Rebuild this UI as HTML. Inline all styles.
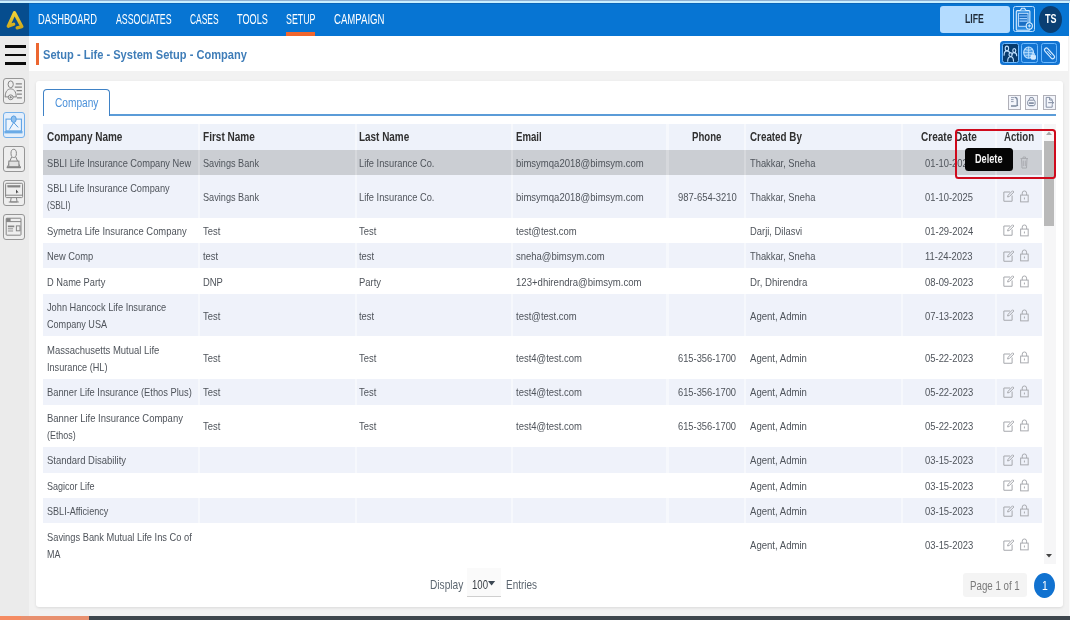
<!DOCTYPE html>
<html lang="en"><head><meta charset="utf-8"><title>Setup - Life - System Setup - Company</title>
<style>
html,body{margin:0;padding:0}
body{width:1070px;height:620px;position:relative;overflow:hidden;background:#f2f2f2;font-family:"Liberation Sans",sans-serif;color:#555}
.a{position:absolute}
.t{position:absolute;white-space:nowrap;transform-origin:0 50%;line-height:17px;filter:blur(.35px)}
svg{filter:blur(.3px)}
.b{font-size:12px;color:#5a5d62}
.h{font-size:12.5px;font-weight:bold;color:#2a2a2a}
.nav{font-size:13.5px;color:#fff}
.cell{position:absolute}
svg{position:absolute;overflow:visible}
</style></head><body>

<div class="a" style="left:0;top:0;width:1070px;height:1px;background:#8fb0d2"></div>
<div class="a" style="left:0;top:1px;width:1070px;height:2px;background:#c9efff"></div>
<div class="a" style="left:0;top:3px;width:1068.5px;height:33px;background:#0775d3"></div>
<div class="a" style="left:1068.5px;top:3px;width:1.5px;height:617px;background:#fafafa"></div>
<div class="a" style="left:0;top:3px;width:29px;height:33px;background:#064d8e"></div>
<svg style="left:5px;top:9px" width="20" height="22" viewBox="0 0 20 22"><defs><linearGradient id="g" gradientUnits="userSpaceOnUse" x1="0" y1="2" x2="0" y2="21"><stop offset="0" stop-color="#f6d63a"/><stop offset="1" stop-color="#c9a216"/></linearGradient></defs>
<path d="M3.3 17.2 L9.5 3.8 L16.8 17.6 L12.2 18.8 M3.3 17.2 L8.6 15.2" fill="none" stroke="url(#g)" stroke-width="3.3" stroke-linejoin="round" stroke-linecap="round"/></svg>
<span class="t" style="left:38.4px;top:18.8px;font:14.3px 'Liberation Sans',sans-serif;line-height:17px;color:#fff;transform:translateY(-50%) scaleX(0.652);">DASHBOARD</span>
<span class="t" style="left:116.0px;top:18.8px;font:14.3px 'Liberation Sans',sans-serif;line-height:17px;color:#fff;transform:translateY(-50%) scaleX(0.615);">ASSOCIATES</span>
<span class="t" style="left:189.7px;top:18.8px;font:14.3px 'Liberation Sans',sans-serif;line-height:17px;color:#fff;transform:translateY(-50%) scaleX(0.590);">CASES</span>
<span class="t" style="left:237.4px;top:18.8px;font:14.3px 'Liberation Sans',sans-serif;line-height:17px;color:#fff;transform:translateY(-50%) scaleX(0.639);">TOOLS</span>
<span class="t" style="left:286.4px;top:18.8px;font:14.3px 'Liberation Sans',sans-serif;line-height:17px;color:#fff;transform:translateY(-50%) scaleX(0.619);">SETUP</span>
<span class="t" style="left:334.0px;top:18.8px;font:14.3px 'Liberation Sans',sans-serif;line-height:17px;color:#fff;transform:translateY(-50%) scaleX(0.672);">CAMPAIGN</span>
<div class="a" style="left:286.2px;top:32.3px;width:29.3px;height:3.7px;background:#f0662d"></div>
<div class="a" style="left:29px;top:3px;width:1039.5px;height:1px;background:#0a66ba"></div>
<div class="a" style="left:940.4px;top:6.2px;width:69.8px;height:26.5px;background:#b4dcff;border-radius:3px"></div>
<span class="t" style="left:965.4px;top:17.8px;font:bold 13.5px 'Liberation Sans',sans-serif;line-height:17px;color:#1f2b38;transform:translateY(-50%) scaleX(0.643);">LIFE</span>
<div class="a" style="left:1013.3px;top:5.6px;width:21.9px;height:26.4px;box-sizing:border-box;border:1.3px solid #b5dcff;border-radius:2.5px;background:#0f79d6"></div>
<svg style="left:1013.3px;top:5.6px" width="21.9" height="26.4" viewBox="0 0 21.9 26.4" fill="none" stroke="#d9eeff" stroke-width="1.1">
<rect x="3.3" y="4.6" width="13.6" height="19.6" rx="1" fill="#2a8ae0"/><path d="M7.3 4.6 L8.6 2.2 L11.6 2.2 L12.9 4.6" fill="#2a8ae0"/>
<rect x="5.6" y="7.3" width="9.4" height="13" fill="#1b6fc4" stroke="#cfe8ff" stroke-width="0.9"/><path d="M6.5 10h7.6M6.5 12.6h7.6M6.5 15.2h7.6" stroke="#9fd0ff" stroke-width="1.2"/>
<circle cx="16.3" cy="19.9" r="3.1" fill="#0f79d6" stroke="#d9eeff" stroke-width="1.1"/><path d="M16.3 18.3v3.2M14.7 19.9h3.2" stroke-width="1"/></svg>
<div class="a" style="left:1038.9px;top:5.5px;width:23.1px;height:27.4px;border-radius:50%;background:#0a3f73"></div>
<span class="t" style="left:1044.7px;top:18.2px;font:bold 13.5px 'Liberation Sans',sans-serif;line-height:17px;color:#fff;transform:translateY(-50%) scaleX(0.666);">TS</span>
<div class="a" style="left:0;top:36px;width:28.7px;height:580px;background:#ebebeb"></div>
<div class="a" style="left:5px;top:45.2px;width:21px;height:2.8px;background:#0c0c0c"></div>
<div class="a" style="left:5px;top:53.6px;width:21px;height:2.8px;background:#0c0c0c"></div>
<div class="a" style="left:5px;top:61.9px;width:21px;height:2.8px;background:#0c0c0c"></div>
<div class="a" style="left:28.7px;top:36px;width:1039.8px;height:35px;background:#fff"></div>
<div class="a" style="left:35.9px;top:42.8px;width:3.3px;height:22px;background:#ec6630"></div>
<span class="t" style="left:43.4px;top:54.3px;font:bold 13px 'Liberation Sans',sans-serif;line-height:17px;color:#3f7db8;transform:translateY(-50%) scaleX(0.853);">Setup - Life - System Setup - Company</span>
<div class="a" style="left:999.5px;top:40.9px;width:60.4px;height:24.4px;background:#1273d1;border-radius:3.5px"></div>
<div class="a" style="left:1002.0px;top:43.1px;width:16.6px;height:20.3px;box-sizing:border-box;border:1.1px solid #6cb9ff;border-radius:2.5px;background:#073b6d"></div>
<div class="a" style="left:1021.4px;top:43.1px;width:16.6px;height:20.3px;box-sizing:border-box;border:1.1px solid #6cb9ff;border-radius:2.5px;background:#1273d1"></div>
<div class="a" style="left:1040.9px;top:43.1px;width:16.6px;height:20.3px;box-sizing:border-box;border:1.1px solid #6cb9ff;border-radius:2.5px;background:#1273d1"></div>
<svg style="left:1002.0px;top:43.1px" width="16.6" height="20.3" viewBox="0 0 16.6 20.3" fill="none" stroke="#bfe0ff" stroke-width="1.1" stroke-linecap="round">
<ellipse cx="4.9" cy="5.4" rx="1.7" ry="2.3"/><path d="M2.1 12.2c0-3 1.2-4.3 2.8-4.3s2.6 1 2.9 2.4"/>
<ellipse cx="12.3" cy="7.6" rx="1.5" ry="2"/><path d="M9.8 11.2c.4-1 1.3-1.6 2.5-1.6 1.6 0 2.4 1.2 2.4 3.2"/>
<ellipse cx="8.6" cy="11.6" rx="1.6" ry="2"/><path d="M5.7 18.2c0-3 1.2-4.4 2.9-4.4s2.9 1.4 2.9 4.4"/></svg>
<svg style="left:1021.4px;top:43.1px" width="16.6" height="20.3" viewBox="0 0 16.6 20.3" fill="none" stroke="#c4e3ff" stroke-width="1.1">
<ellipse cx="7.6" cy="9.6" rx="4.9" ry="5.6" fill="#7fc0f7" fill-opacity=".55"/><path d="M7.6 4v11.2M2.7 9.6h9.8M4.2 6.3c2 1.2 4.8 1.2 6.8 0M4.2 12.9c2-1.2 4.8-1.2 6.8 0" stroke-width=".8"/>
<rect x="10.1" y="12.3" width="4.4" height="3.9" rx=".6" fill="#cfe8ff" stroke="#e6f3ff" stroke-width=".8"/><path d="M11.1 12.3v-1.2a1.2 1.2 0 0 1 2.4 0v1.2" stroke-width=".9"/></svg>
<svg style="left:1040.9px;top:43.1px" width="16.6" height="20.3" viewBox="0 0 16.6 20.3" fill="none" stroke="#d4eaff" stroke-width="1.2">
<g transform="translate(8.5 10.4) rotate(-42)"><rect x="-1.9" y="-6.6" width="3.8" height="13.2" rx="1.9"/><path d="M0 -3.4v6" stroke-width=".9"/></g></svg>
<div class="a" style="left:3.3px;top:78.1px;width:21.7px;height:25.8px;box-sizing:border-box;border:1.4px solid #969696;border-radius:3px;background:#eeeeee"></div>
<svg style="left:3.3px;top:78.1px" width="21.7" height="25.8" viewBox="0 0 21.7 25.8" fill="none" stroke="#858585" stroke-width="1"><ellipse cx="7.7" cy="6.3" rx="2.6" ry="3.4"/><path d="M2.2 18.9C2.2 13 5 10.9 7.7 10.9S13.2 13 13.2 18.9M1.8 18.9h3.6M10 18.9h3.6"/><circle cx="7.7" cy="19.3" r="2.4"/><circle cx="7.7" cy="19.3" r=".7" fill="#858585"/><path d="M12.8 5.8h6.1M11.8 9.1h7.1M13.6 12.6h5.3M13.9 16.2h5M13.9 19.8h5" stroke-width="1.2"/></svg>
<div class="a" style="left:3.3px;top:112.1px;width:21.7px;height:25.8px;box-sizing:border-box;border:1.4px solid #74b0ea;border-radius:3px;background:#e3eefb"></div>
<svg style="left:3.3px;top:112.1px" width="21.7" height="25.8" viewBox="0 0 21.7 25.8" fill="none" stroke="#559de2" stroke-width="1"><rect x="3" y="7.1" width="15.4" height="11.8" fill="#eef5fd"/><path d="M1.4 20.2h18.1" stroke="#6aaae6" stroke-width="2.4"/><ellipse cx="10.7" cy="7.2" rx="2.5" ry="3.3" fill="#8fc0ee"/><path d="M10.7 10.5L6.3 17.6M10.7 10.5L15.2 15.4"/></svg>
<div class="a" style="left:3.3px;top:146.1px;width:21.7px;height:25.8px;box-sizing:border-box;border:1.4px solid #969696;border-radius:3px;background:#eeeeee"></div>
<svg style="left:3.3px;top:146.1px" width="21.7" height="25.8" viewBox="0 0 21.7 25.8" fill="none" stroke="#858585" stroke-width="1"><ellipse cx="10.7" cy="7.4" rx="2.7" ry="4.1"/><path d="M8.6 11 L4.4 21.2M12.8 11L17.2 21.2M3.8 21.4h14" /><path d="M3.8 21.4h14" stroke-width="1.7"/><rect x="5.8" y="15.1" width="10.1" height="5.6" fill="#e2e2e2"/></svg>
<div class="a" style="left:3.3px;top:179.8px;width:21.7px;height:25.8px;box-sizing:border-box;border:1.4px solid #969696;border-radius:3px;background:#eeeeee"></div>
<svg style="left:3.3px;top:179.8px" width="21.7" height="25.8" viewBox="0 0 21.7 25.8" fill="none" stroke="#858585" stroke-width="1"><rect x="2.6" y="3.3" width="17" height="14.3" rx="1"/><path d="M2.6 15.2h17"/><rect x="4.8" y="5.5" width="12.2" height="1.6" fill="#858585" stroke-width=".6"/><path d="M13 9.6l2.6 2.8-1.6.1-.9 1.3z" fill="#444" stroke="none"/><path d="M8.2 17.6L7.5 21.9h6.6l-.7-4.3M5.8 22h10"/></svg>
<div class="a" style="left:3.3px;top:213.9px;width:21.7px;height:25.8px;box-sizing:border-box;border:1.4px solid #969696;border-radius:3px;background:#eeeeee"></div>
<svg style="left:3.3px;top:213.9px" width="21.7" height="25.8" viewBox="0 0 21.7 25.8" fill="none" stroke="#858585" stroke-width="1"><rect x="3.2" y="4.2" width="14.8" height="17" rx=".6"/><path d="M3.2 7.6h14.8"/><rect x="3.2" y="4.2" width="4.4" height="3.4" fill="#858585" stroke="none"/><path d="M4.9 12.4h6.4" stroke-width="1.7"/><path d="M4.9 14.8h5.2M4.9 17h5.2" stroke-width=".9"/><rect x="13.4" y="11.9" width="3.6" height="4.9"/></svg>
<div class="a" style="left:35.7px;top:80.8px;width:1027px;height:526.2px;background:#fff;border-radius:3px;box-shadow:0 1px 3px rgba(0,0,0,.10)"></div>
<div class="a" style="left:43.1px;top:113.7px;width:1012.8px;height:2.2px;background:#5b9cd8"></div>
<div class="a" style="left:43.1px;top:89px;width:67.2px;height:26.6px;box-sizing:border-box;border:1.2px solid #3f82c6;border-bottom:none;border-radius:4px 4px 0 0;background:#fff"></div>
<span class="t" style="left:54.9px;top:103.2px;font:12px 'Liberation Sans',sans-serif;line-height:17px;color:#4a90d9;transform:translateY(-50%) scaleX(0.845);">Company</span>
<div class="a" style="left:1008.1px;top:94.9px;width:12.8px;height:14.9px;box-sizing:border-box;border:1px solid #b0b0b8;background:#f3f5fb"></div>
<svg style="left:1008.1px;top:94.9px" width="12.8" height="14.9" viewBox="0 0 12.8 14.9" fill="none" stroke="#7a879c" stroke-width=".9"><path d="M3 2.6h3.2M3 4.6h2.6M3 6.6h2.6" stroke-width=".8"/><path d="M6.6 2.3c2.2 0 2.6 1.2 2.6 3v5.6M3 11h5.2M8.2 11l1.8-.9" stroke-width="1.3"/></svg>
<div class="a" style="left:1025.4px;top:94.9px;width:12.8px;height:14.9px;box-sizing:border-box;border:1px solid #b0b0b8;background:#f3f5fb"></div>
<svg style="left:1025.4px;top:94.9px" width="12.8" height="14.9" viewBox="0 0 12.8 14.9" fill="none" stroke="#7a879c" stroke-width=".9"><path d="M4 5.2L5 2.6h3L9 5.2"/><rect x="2.7" y="5.2" width="7.4" height="5.4" rx="1.6"/><path d="M4 8.1h4.8" stroke-width="1.6"/><path d="M4.2 10.8h4.4" stroke-width=".8"/></svg>
<div class="a" style="left:1043.1px;top:94.9px;width:12.8px;height:14.9px;box-sizing:border-box;border:1px solid #b0b0b8;background:#f3f5fb"></div>
<svg style="left:1043.1px;top:94.9px" width="12.8" height="14.9" viewBox="0 0 12.8 14.9" fill="none" stroke="#7a879c" stroke-width=".9"><path d="M3.2 2.4h3.6l2.4 2.4v1.4M9.2 9.4v2.8H3.2V2.4M6.6 2.6v2.4h2.4"/><path d="M5.2 7.7h5.4M9 6.2l1.6 1.5L9 9.2" stroke-width="1"/></svg>
<div class="a" style="left:43.1px;top:124px;width:1012.8px;height:439.6px;overflow:hidden">
<div class="a" style="left:0;top:0;width:999.3px;height:25.5px;background:#f6f8fc"></div>
<div class="cell" style="left:0.0px;top:0;width:154.5px;height:25.5px;background:#eef2fa"></div>
<div class="cell" style="left:157.1px;top:0;width:154.4px;height:25.5px;background:#eef2fa"></div>
<div class="cell" style="left:313.9px;top:0;width:154.0px;height:25.5px;background:#eef2fa"></div>
<div class="cell" style="left:470.2px;top:0;width:152.9px;height:25.5px;background:#eef2fa"></div>
<div class="cell" style="left:625.9px;top:0;width:75.0px;height:25.5px;background:#eef2fa"></div>
<div class="cell" style="left:703.3px;top:0;width:154.5px;height:25.5px;background:#eef2fa"></div>
<div class="cell" style="left:859.8px;top:0;width:91.7px;height:25.5px;background:#eef2fa"></div>
<div class="cell" style="left:953.7px;top:0;width:45.6px;height:25.5px;background:#eef2fa"></div>
<span class="t" style="left:4.1px;top:12.8px;font:bold 12.5px 'Liberation Sans',sans-serif;line-height:17px;color:#303030;transform:translateY(-50%) scaleX(0.798);">Company Name</span>
<span class="t" style="left:160.0px;top:12.8px;font:bold 12.5px 'Liberation Sans',sans-serif;line-height:17px;color:#303030;transform:translateY(-50%) scaleX(0.803);">First Name</span>
<span class="t" style="left:316.3px;top:12.8px;font:bold 12.5px 'Liberation Sans',sans-serif;line-height:17px;color:#303030;transform:translateY(-50%) scaleX(0.794);">Last Name</span>
<span class="t" style="left:472.9px;top:12.8px;font:bold 12.5px 'Liberation Sans',sans-serif;line-height:17px;color:#303030;transform:translateY(-50%) scaleX(0.770);">Email</span>
<span class="t" style="left:649.0px;top:12.8px;font:bold 12.5px 'Liberation Sans',sans-serif;line-height:17px;color:#303030;transform:translateY(-50%) scaleX(0.770);">Phone</span>
<span class="t" style="left:706.8px;top:12.8px;font:bold 12.5px 'Liberation Sans',sans-serif;line-height:17px;color:#303030;transform:translateY(-50%) scaleX(0.786);">Created By</span>
<span class="t" style="left:877.9px;top:12.8px;font:bold 12.5px 'Liberation Sans',sans-serif;line-height:17px;color:#303030;transform:translateY(-50%) scaleX(0.804);">Create Date</span>
<span class="t" style="left:961.3px;top:12.8px;font:bold 12.5px 'Liberation Sans',sans-serif;line-height:17px;color:#303030;transform:translateY(-50%) scaleX(0.774);">Action</span>
<div class="a" style="left:0;top:25.5px;width:999.3px;height:25.4px;background:#d6d8dc"></div>
<div class="cell" style="left:0.0px;top:25.5px;width:154.5px;height:25.4px;background:#cbced3"></div>
<div class="cell" style="left:157.1px;top:25.5px;width:154.4px;height:25.4px;background:#cbced3"></div>
<div class="cell" style="left:313.9px;top:25.5px;width:154.0px;height:25.4px;background:#cbced3"></div>
<div class="cell" style="left:470.2px;top:25.5px;width:152.9px;height:25.4px;background:#cbced3"></div>
<div class="cell" style="left:625.9px;top:25.5px;width:75.0px;height:25.4px;background:#cbced3"></div>
<div class="cell" style="left:703.3px;top:25.5px;width:154.5px;height:25.4px;background:#cbced3"></div>
<div class="cell" style="left:859.8px;top:25.5px;width:91.7px;height:25.4px;background:#cbced3"></div>
<div class="cell" style="left:953.7px;top:25.5px;width:45.6px;height:25.4px;background:#cbced3"></div>
<span class="t" style="left:4.1px;top:38.5px;font:11.5px 'Liberation Sans',sans-serif;line-height:17px;color:#4f545b;transform:translateY(-50%) scaleX(0.805);">SBLI Life Insurance Company New</span>
<span class="t" style="left:160.0px;top:38.5px;font:11.5px 'Liberation Sans',sans-serif;line-height:17px;color:#4f545b;transform:translateY(-50%) scaleX(0.796);">Savings Bank</span>
<span class="t" style="left:316.3px;top:38.5px;font:11.5px 'Liberation Sans',sans-serif;line-height:17px;color:#4f545b;transform:translateY(-50%) scaleX(0.808);">Life Insurance Co.</span>
<span class="t" style="left:472.9px;top:38.5px;font:11.5px 'Liberation Sans',sans-serif;line-height:17px;color:#4f545b;transform:translateY(-50%) scaleX(0.828);">bimsymqa2018@bimsym.com</span>
<span class="t" style="left:706.8px;top:38.5px;font:11.5px 'Liberation Sans',sans-serif;line-height:17px;color:#4f545b;transform:translateY(-50%) scaleX(0.811);">Thakkar, Sneha</span>
<span class="t" style="left:882.0px;top:38.5px;font:11.5px 'Liberation Sans',sans-serif;line-height:17px;color:#4f545b;transform:translateY(-50%) scaleX(0.814);">01-10-2025</span>
<svg style="left:976.9px;top:32.2px" width="8.5" height="12.6" viewBox="0 0 17 25" fill="none" stroke="#a9abb0" stroke-width="2"><path d="M1 5h15M6 5V2h5v3M3 5l1 19h9l1-19M6.5 9v11M10.5 9v11"/></svg>
<div class="a" style="left:0;top:50.9px;width:999.3px;height:42.7px;background:#f6f8fc"></div>
<div class="cell" style="left:0.0px;top:50.9px;width:154.5px;height:42.7px;background:#eff2fa"></div>
<div class="cell" style="left:157.1px;top:50.9px;width:154.4px;height:42.7px;background:#eff2fa"></div>
<div class="cell" style="left:313.9px;top:50.9px;width:154.0px;height:42.7px;background:#eff2fa"></div>
<div class="cell" style="left:470.2px;top:50.9px;width:152.9px;height:42.7px;background:#eff2fa"></div>
<div class="cell" style="left:625.9px;top:50.9px;width:75.0px;height:42.7px;background:#eff2fa"></div>
<div class="cell" style="left:703.3px;top:50.9px;width:154.5px;height:42.7px;background:#eff2fa"></div>
<div class="cell" style="left:859.8px;top:50.9px;width:91.7px;height:42.7px;background:#eff2fa"></div>
<div class="cell" style="left:953.7px;top:50.9px;width:45.6px;height:42.7px;background:#eff2fa"></div>
<span class="t" style="left:4.1px;top:64.1px;font:11.5px 'Liberation Sans',sans-serif;line-height:17px;color:#4f545b;transform:translateY(-50%) scaleX(0.803);">SBLI Life Insurance Company</span>
<span class="t" style="left:4.1px;top:81.1px;font:11.5px 'Liberation Sans',sans-serif;line-height:17px;color:#4f545b;transform:translateY(-50%) scaleX(0.718);">(SBLI)</span>
<span class="t" style="left:160.0px;top:72.6px;font:11.5px 'Liberation Sans',sans-serif;line-height:17px;color:#4f545b;transform:translateY(-50%) scaleX(0.796);">Savings Bank</span>
<span class="t" style="left:316.3px;top:72.6px;font:11.5px 'Liberation Sans',sans-serif;line-height:17px;color:#4f545b;transform:translateY(-50%) scaleX(0.808);">Life Insurance Co.</span>
<span class="t" style="left:472.9px;top:72.6px;font:11.5px 'Liberation Sans',sans-serif;line-height:17px;color:#4f545b;transform:translateY(-50%) scaleX(0.828);">bimsymqa2018@bimsym.com</span>
<span class="t" style="left:634.7px;top:72.6px;font:11.5px 'Liberation Sans',sans-serif;line-height:17px;color:#4f545b;transform:translateY(-50%) scaleX(0.821);">987-654-3210</span>
<span class="t" style="left:706.8px;top:72.6px;font:11.5px 'Liberation Sans',sans-serif;line-height:17px;color:#4f545b;transform:translateY(-50%) scaleX(0.811);">Thakkar, Sneha</span>
<span class="t" style="left:882.0px;top:72.6px;font:11.5px 'Liberation Sans',sans-serif;line-height:17px;color:#4f545b;transform:translateY(-50%) scaleX(0.814);">01-10-2025</span>
<svg style="left:959.8px;top:66.2px" width="11.2" height="12" viewBox="0 0 22 24" fill="none" stroke="#a6a8ad" stroke-width="2"><path d="M14 4H1.5v18.5H18V11"/><path d="M9 14l1-3.5L19 1.5l2.5 2.5L12.5 13z"/></svg>
<svg style="left:976.6px;top:65.6px" width="8.8" height="12.6" viewBox="0 0 18 26" fill="none" stroke="#a6a8ad" stroke-width="2"><rect x="1.2" y="10.5" width="15.6" height="14"/><path d="M4.5 10.5V6.5a4.5 4.5 0 0 1 9 0v4"/><rect x="8" y="15.5" width="2" height="4" fill="#a6a8ad" stroke="none"/></svg>
<span class="t" style="left:4.1px;top:106.7px;font:11.5px 'Liberation Sans',sans-serif;line-height:17px;color:#4f545b;transform:translateY(-50%) scaleX(0.818);">Symetra Life Insurance Company</span>
<span class="t" style="left:160.0px;top:106.7px;font:11.5px 'Liberation Sans',sans-serif;line-height:17px;color:#4f545b;transform:translateY(-50%) scaleX(0.820);">Test</span>
<span class="t" style="left:316.3px;top:106.7px;font:11.5px 'Liberation Sans',sans-serif;line-height:17px;color:#4f545b;transform:translateY(-50%) scaleX(0.820);">Test</span>
<span class="t" style="left:472.9px;top:106.7px;font:11.5px 'Liberation Sans',sans-serif;line-height:17px;color:#4f545b;transform:translateY(-50%) scaleX(0.825);">test@test.com</span>
<span class="t" style="left:706.8px;top:106.7px;font:11.5px 'Liberation Sans',sans-serif;line-height:17px;color:#4f545b;transform:translateY(-50%) scaleX(0.817);">Darji, Dilasvi</span>
<span class="t" style="left:882.0px;top:106.7px;font:11.5px 'Liberation Sans',sans-serif;line-height:17px;color:#4f545b;transform:translateY(-50%) scaleX(0.820);">01-29-2024</span>
<svg style="left:959.8px;top:100.2px" width="11.2" height="12" viewBox="0 0 22 24" fill="none" stroke="#a6a8ad" stroke-width="2"><path d="M14 4H1.5v18.5H18V11"/><path d="M9 14l1-3.5L19 1.5l2.5 2.5L12.5 13z"/></svg>
<svg style="left:976.6px;top:99.7px" width="8.8" height="12.6" viewBox="0 0 18 26" fill="none" stroke="#a6a8ad" stroke-width="2"><rect x="1.2" y="10.5" width="15.6" height="14"/><path d="M4.5 10.5V6.5a4.5 4.5 0 0 1 9 0v4"/><rect x="8" y="15.5" width="2" height="4" fill="#a6a8ad" stroke="none"/></svg>
<div class="a" style="left:0;top:119.0px;width:999.3px;height:25.4px;background:#f6f8fc"></div>
<div class="cell" style="left:0.0px;top:119.0px;width:154.5px;height:25.4px;background:#eff2fa"></div>
<div class="cell" style="left:157.1px;top:119.0px;width:154.4px;height:25.4px;background:#eff2fa"></div>
<div class="cell" style="left:313.9px;top:119.0px;width:154.0px;height:25.4px;background:#eff2fa"></div>
<div class="cell" style="left:470.2px;top:119.0px;width:152.9px;height:25.4px;background:#eff2fa"></div>
<div class="cell" style="left:625.9px;top:119.0px;width:75.0px;height:25.4px;background:#eff2fa"></div>
<div class="cell" style="left:703.3px;top:119.0px;width:154.5px;height:25.4px;background:#eff2fa"></div>
<div class="cell" style="left:859.8px;top:119.0px;width:91.7px;height:25.4px;background:#eff2fa"></div>
<div class="cell" style="left:953.7px;top:119.0px;width:45.6px;height:25.4px;background:#eff2fa"></div>
<span class="t" style="left:4.1px;top:132.0px;font:11.5px 'Liberation Sans',sans-serif;line-height:17px;color:#4f545b;transform:translateY(-50%) scaleX(0.810);">New Comp</span>
<span class="t" style="left:160.0px;top:132.0px;font:11.5px 'Liberation Sans',sans-serif;line-height:17px;color:#4f545b;transform:translateY(-50%) scaleX(0.820);">test</span>
<span class="t" style="left:316.3px;top:132.0px;font:11.5px 'Liberation Sans',sans-serif;line-height:17px;color:#4f545b;transform:translateY(-50%) scaleX(0.820);">test</span>
<span class="t" style="left:472.9px;top:132.0px;font:11.5px 'Liberation Sans',sans-serif;line-height:17px;color:#4f545b;transform:translateY(-50%) scaleX(0.825);">sneha@bimsym.com</span>
<span class="t" style="left:706.8px;top:132.0px;font:11.5px 'Liberation Sans',sans-serif;line-height:17px;color:#4f545b;transform:translateY(-50%) scaleX(0.811);">Thakkar, Sneha</span>
<span class="t" style="left:882.0px;top:132.0px;font:11.5px 'Liberation Sans',sans-serif;line-height:17px;color:#4f545b;transform:translateY(-50%) scaleX(0.820);">11-24-2023</span>
<svg style="left:959.8px;top:125.6px" width="11.2" height="12" viewBox="0 0 22 24" fill="none" stroke="#a6a8ad" stroke-width="2"><path d="M14 4H1.5v18.5H18V11"/><path d="M9 14l1-3.5L19 1.5l2.5 2.5L12.5 13z"/></svg>
<svg style="left:976.6px;top:125.0px" width="8.8" height="12.6" viewBox="0 0 18 26" fill="none" stroke="#a6a8ad" stroke-width="2"><rect x="1.2" y="10.5" width="15.6" height="14"/><path d="M4.5 10.5V6.5a4.5 4.5 0 0 1 9 0v4"/><rect x="8" y="15.5" width="2" height="4" fill="#a6a8ad" stroke="none"/></svg>
<span class="t" style="left:4.1px;top:157.5px;font:11.5px 'Liberation Sans',sans-serif;line-height:17px;color:#4f545b;transform:translateY(-50%) scaleX(0.807);">D Name Party</span>
<span class="t" style="left:160.0px;top:157.5px;font:11.5px 'Liberation Sans',sans-serif;line-height:17px;color:#4f545b;transform:translateY(-50%) scaleX(0.820);">DNP</span>
<span class="t" style="left:316.3px;top:157.5px;font:11.5px 'Liberation Sans',sans-serif;line-height:17px;color:#4f545b;transform:translateY(-50%) scaleX(0.820);">Party</span>
<span class="t" style="left:472.9px;top:157.5px;font:11.5px 'Liberation Sans',sans-serif;line-height:17px;color:#4f545b;transform:translateY(-50%) scaleX(0.833);">123+dhirendra@bimsym.com</span>
<span class="t" style="left:706.8px;top:157.5px;font:11.5px 'Liberation Sans',sans-serif;line-height:17px;color:#4f545b;transform:translateY(-50%) scaleX(0.838);">Dr, Dhirendra</span>
<span class="t" style="left:882.0px;top:157.5px;font:11.5px 'Liberation Sans',sans-serif;line-height:17px;color:#4f545b;transform:translateY(-50%) scaleX(0.820);">08-09-2023</span>
<svg style="left:959.8px;top:151.1px" width="11.2" height="12" viewBox="0 0 22 24" fill="none" stroke="#a6a8ad" stroke-width="2"><path d="M14 4H1.5v18.5H18V11"/><path d="M9 14l1-3.5L19 1.5l2.5 2.5L12.5 13z"/></svg>
<svg style="left:976.6px;top:150.5px" width="8.8" height="12.6" viewBox="0 0 18 26" fill="none" stroke="#a6a8ad" stroke-width="2"><rect x="1.2" y="10.5" width="15.6" height="14"/><path d="M4.5 10.5V6.5a4.5 4.5 0 0 1 9 0v4"/><rect x="8" y="15.5" width="2" height="4" fill="#a6a8ad" stroke="none"/></svg>
<div class="a" style="left:0;top:169.8px;width:999.3px;height:42.7px;background:#f6f8fc"></div>
<div class="cell" style="left:0.0px;top:169.8px;width:154.5px;height:42.7px;background:#eff2fa"></div>
<div class="cell" style="left:157.1px;top:169.8px;width:154.4px;height:42.7px;background:#eff2fa"></div>
<div class="cell" style="left:313.9px;top:169.8px;width:154.0px;height:42.7px;background:#eff2fa"></div>
<div class="cell" style="left:470.2px;top:169.8px;width:152.9px;height:42.7px;background:#eff2fa"></div>
<div class="cell" style="left:625.9px;top:169.8px;width:75.0px;height:42.7px;background:#eff2fa"></div>
<div class="cell" style="left:703.3px;top:169.8px;width:154.5px;height:42.7px;background:#eff2fa"></div>
<div class="cell" style="left:859.8px;top:169.8px;width:91.7px;height:42.7px;background:#eff2fa"></div>
<div class="cell" style="left:953.7px;top:169.8px;width:45.6px;height:42.7px;background:#eff2fa"></div>
<span class="t" style="left:4.1px;top:183.0px;font:11.5px 'Liberation Sans',sans-serif;line-height:17px;color:#4f545b;transform:translateY(-50%) scaleX(0.804);">John Hancock Life Insurance</span>
<span class="t" style="left:4.1px;top:200.0px;font:11.5px 'Liberation Sans',sans-serif;line-height:17px;color:#4f545b;transform:translateY(-50%) scaleX(0.789);">Company USA</span>
<span class="t" style="left:160.0px;top:191.5px;font:11.5px 'Liberation Sans',sans-serif;line-height:17px;color:#4f545b;transform:translateY(-50%) scaleX(0.820);">Test</span>
<span class="t" style="left:316.3px;top:191.5px;font:11.5px 'Liberation Sans',sans-serif;line-height:17px;color:#4f545b;transform:translateY(-50%) scaleX(0.820);">test</span>
<span class="t" style="left:472.9px;top:191.5px;font:11.5px 'Liberation Sans',sans-serif;line-height:17px;color:#4f545b;transform:translateY(-50%) scaleX(0.825);">test@test.com</span>
<span class="t" style="left:706.8px;top:191.5px;font:11.5px 'Liberation Sans',sans-serif;line-height:17px;color:#4f545b;transform:translateY(-50%) scaleX(0.832);">Agent, Admin</span>
<span class="t" style="left:882.0px;top:191.5px;font:11.5px 'Liberation Sans',sans-serif;line-height:17px;color:#4f545b;transform:translateY(-50%) scaleX(0.820);">07-13-2023</span>
<svg style="left:959.8px;top:185.1px" width="11.2" height="12" viewBox="0 0 22 24" fill="none" stroke="#a6a8ad" stroke-width="2"><path d="M14 4H1.5v18.5H18V11"/><path d="M9 14l1-3.5L19 1.5l2.5 2.5L12.5 13z"/></svg>
<svg style="left:976.6px;top:184.5px" width="8.8" height="12.6" viewBox="0 0 18 26" fill="none" stroke="#a6a8ad" stroke-width="2"><rect x="1.2" y="10.5" width="15.6" height="14"/><path d="M4.5 10.5V6.5a4.5 4.5 0 0 1 9 0v4"/><rect x="8" y="15.5" width="2" height="4" fill="#a6a8ad" stroke="none"/></svg>
<span class="t" style="left:4.1px;top:225.7px;font:11.5px 'Liberation Sans',sans-serif;line-height:17px;color:#4f545b;transform:translateY(-50%) scaleX(0.825);">Massachusetts Mutual Life</span>
<span class="t" style="left:4.1px;top:242.7px;font:11.5px 'Liberation Sans',sans-serif;line-height:17px;color:#4f545b;transform:translateY(-50%) scaleX(0.795);">Insurance (HL)</span>
<span class="t" style="left:160.0px;top:234.2px;font:11.5px 'Liberation Sans',sans-serif;line-height:17px;color:#4f545b;transform:translateY(-50%) scaleX(0.820);">Test</span>
<span class="t" style="left:316.3px;top:234.2px;font:11.5px 'Liberation Sans',sans-serif;line-height:17px;color:#4f545b;transform:translateY(-50%) scaleX(0.820);">Test</span>
<span class="t" style="left:472.9px;top:234.2px;font:11.5px 'Liberation Sans',sans-serif;line-height:17px;color:#4f545b;transform:translateY(-50%) scaleX(0.823);">test4@test.com</span>
<span class="t" style="left:634.7px;top:234.2px;font:11.5px 'Liberation Sans',sans-serif;line-height:17px;color:#4f545b;transform:translateY(-50%) scaleX(0.810);">615-356-1700</span>
<span class="t" style="left:706.8px;top:234.2px;font:11.5px 'Liberation Sans',sans-serif;line-height:17px;color:#4f545b;transform:translateY(-50%) scaleX(0.832);">Agent, Admin</span>
<span class="t" style="left:882.0px;top:234.2px;font:11.5px 'Liberation Sans',sans-serif;line-height:17px;color:#4f545b;transform:translateY(-50%) scaleX(0.820);">05-22-2023</span>
<svg style="left:959.8px;top:227.8px" width="11.2" height="12" viewBox="0 0 22 24" fill="none" stroke="#a6a8ad" stroke-width="2"><path d="M14 4H1.5v18.5H18V11"/><path d="M9 14l1-3.5L19 1.5l2.5 2.5L12.5 13z"/></svg>
<svg style="left:976.6px;top:227.2px" width="8.8" height="12.6" viewBox="0 0 18 26" fill="none" stroke="#a6a8ad" stroke-width="2"><rect x="1.2" y="10.5" width="15.6" height="14"/><path d="M4.5 10.5V6.5a4.5 4.5 0 0 1 9 0v4"/><rect x="8" y="15.5" width="2" height="4" fill="#a6a8ad" stroke="none"/></svg>
<div class="a" style="left:0;top:255.2px;width:999.3px;height:25.4px;background:#f6f8fc"></div>
<div class="cell" style="left:0.0px;top:255.2px;width:154.5px;height:25.4px;background:#eff2fa"></div>
<div class="cell" style="left:157.1px;top:255.2px;width:154.4px;height:25.4px;background:#eff2fa"></div>
<div class="cell" style="left:313.9px;top:255.2px;width:154.0px;height:25.4px;background:#eff2fa"></div>
<div class="cell" style="left:470.2px;top:255.2px;width:152.9px;height:25.4px;background:#eff2fa"></div>
<div class="cell" style="left:625.9px;top:255.2px;width:75.0px;height:25.4px;background:#eff2fa"></div>
<div class="cell" style="left:703.3px;top:255.2px;width:154.5px;height:25.4px;background:#eff2fa"></div>
<div class="cell" style="left:859.8px;top:255.2px;width:91.7px;height:25.4px;background:#eff2fa"></div>
<div class="cell" style="left:953.7px;top:255.2px;width:45.6px;height:25.4px;background:#eff2fa"></div>
<span class="t" style="left:4.1px;top:268.2px;font:11.5px 'Liberation Sans',sans-serif;line-height:17px;color:#4f545b;transform:translateY(-50%) scaleX(0.812);">Banner Life Insurance (Ethos Plus)</span>
<span class="t" style="left:160.0px;top:268.2px;font:11.5px 'Liberation Sans',sans-serif;line-height:17px;color:#4f545b;transform:translateY(-50%) scaleX(0.820);">Test</span>
<span class="t" style="left:316.3px;top:268.2px;font:11.5px 'Liberation Sans',sans-serif;line-height:17px;color:#4f545b;transform:translateY(-50%) scaleX(0.820);">Test</span>
<span class="t" style="left:472.9px;top:268.2px;font:11.5px 'Liberation Sans',sans-serif;line-height:17px;color:#4f545b;transform:translateY(-50%) scaleX(0.823);">test4@test.com</span>
<span class="t" style="left:634.7px;top:268.2px;font:11.5px 'Liberation Sans',sans-serif;line-height:17px;color:#4f545b;transform:translateY(-50%) scaleX(0.810);">615-356-1700</span>
<span class="t" style="left:706.8px;top:268.2px;font:11.5px 'Liberation Sans',sans-serif;line-height:17px;color:#4f545b;transform:translateY(-50%) scaleX(0.832);">Agent, Admin</span>
<span class="t" style="left:882.0px;top:268.2px;font:11.5px 'Liberation Sans',sans-serif;line-height:17px;color:#4f545b;transform:translateY(-50%) scaleX(0.820);">05-22-2023</span>
<svg style="left:959.8px;top:261.9px" width="11.2" height="12" viewBox="0 0 22 24" fill="none" stroke="#a6a8ad" stroke-width="2"><path d="M14 4H1.5v18.5H18V11"/><path d="M9 14l1-3.5L19 1.5l2.5 2.5L12.5 13z"/></svg>
<svg style="left:976.6px;top:261.2px" width="8.8" height="12.6" viewBox="0 0 18 26" fill="none" stroke="#a6a8ad" stroke-width="2"><rect x="1.2" y="10.5" width="15.6" height="14"/><path d="M4.5 10.5V6.5a4.5 4.5 0 0 1 9 0v4"/><rect x="8" y="15.5" width="2" height="4" fill="#a6a8ad" stroke="none"/></svg>
<span class="t" style="left:4.1px;top:293.8px;font:11.5px 'Liberation Sans',sans-serif;line-height:17px;color:#4f545b;transform:translateY(-50%) scaleX(0.824);">Banner Life Insurance Company</span>
<span class="t" style="left:4.1px;top:310.8px;font:11.5px 'Liberation Sans',sans-serif;line-height:17px;color:#4f545b;transform:translateY(-50%) scaleX(0.774);">(Ethos)</span>
<span class="t" style="left:160.0px;top:302.3px;font:11.5px 'Liberation Sans',sans-serif;line-height:17px;color:#4f545b;transform:translateY(-50%) scaleX(0.820);">Test</span>
<span class="t" style="left:316.3px;top:302.3px;font:11.5px 'Liberation Sans',sans-serif;line-height:17px;color:#4f545b;transform:translateY(-50%) scaleX(0.820);">Test</span>
<span class="t" style="left:472.9px;top:302.3px;font:11.5px 'Liberation Sans',sans-serif;line-height:17px;color:#4f545b;transform:translateY(-50%) scaleX(0.823);">test4@test.com</span>
<span class="t" style="left:634.7px;top:302.3px;font:11.5px 'Liberation Sans',sans-serif;line-height:17px;color:#4f545b;transform:translateY(-50%) scaleX(0.810);">615-356-1700</span>
<span class="t" style="left:706.8px;top:302.3px;font:11.5px 'Liberation Sans',sans-serif;line-height:17px;color:#4f545b;transform:translateY(-50%) scaleX(0.832);">Agent, Admin</span>
<span class="t" style="left:882.0px;top:302.3px;font:11.5px 'Liberation Sans',sans-serif;line-height:17px;color:#4f545b;transform:translateY(-50%) scaleX(0.820);">05-22-2023</span>
<svg style="left:959.8px;top:295.9px" width="11.2" height="12" viewBox="0 0 22 24" fill="none" stroke="#a6a8ad" stroke-width="2"><path d="M14 4H1.5v18.5H18V11"/><path d="M9 14l1-3.5L19 1.5l2.5 2.5L12.5 13z"/></svg>
<svg style="left:976.6px;top:295.3px" width="8.8" height="12.6" viewBox="0 0 18 26" fill="none" stroke="#a6a8ad" stroke-width="2"><rect x="1.2" y="10.5" width="15.6" height="14"/><path d="M4.5 10.5V6.5a4.5 4.5 0 0 1 9 0v4"/><rect x="8" y="15.5" width="2" height="4" fill="#a6a8ad" stroke="none"/></svg>
<div class="a" style="left:0;top:323.3px;width:999.3px;height:25.4px;background:#f6f8fc"></div>
<div class="cell" style="left:0.0px;top:323.3px;width:154.5px;height:25.4px;background:#eff2fa"></div>
<div class="cell" style="left:157.1px;top:323.3px;width:154.4px;height:25.4px;background:#eff2fa"></div>
<div class="cell" style="left:313.9px;top:323.3px;width:154.0px;height:25.4px;background:#eff2fa"></div>
<div class="cell" style="left:470.2px;top:323.3px;width:152.9px;height:25.4px;background:#eff2fa"></div>
<div class="cell" style="left:625.9px;top:323.3px;width:75.0px;height:25.4px;background:#eff2fa"></div>
<div class="cell" style="left:703.3px;top:323.3px;width:154.5px;height:25.4px;background:#eff2fa"></div>
<div class="cell" style="left:859.8px;top:323.3px;width:91.7px;height:25.4px;background:#eff2fa"></div>
<div class="cell" style="left:953.7px;top:323.3px;width:45.6px;height:25.4px;background:#eff2fa"></div>
<span class="t" style="left:4.1px;top:336.4px;font:11.5px 'Liberation Sans',sans-serif;line-height:17px;color:#4f545b;transform:translateY(-50%) scaleX(0.824);">Standard Disability</span>
<span class="t" style="left:706.8px;top:336.4px;font:11.5px 'Liberation Sans',sans-serif;line-height:17px;color:#4f545b;transform:translateY(-50%) scaleX(0.832);">Agent, Admin</span>
<span class="t" style="left:882.0px;top:336.4px;font:11.5px 'Liberation Sans',sans-serif;line-height:17px;color:#4f545b;transform:translateY(-50%) scaleX(0.820);">03-15-2023</span>
<svg style="left:959.8px;top:330.0px" width="11.2" height="12" viewBox="0 0 22 24" fill="none" stroke="#a6a8ad" stroke-width="2"><path d="M14 4H1.5v18.5H18V11"/><path d="M9 14l1-3.5L19 1.5l2.5 2.5L12.5 13z"/></svg>
<svg style="left:976.6px;top:329.4px" width="8.8" height="12.6" viewBox="0 0 18 26" fill="none" stroke="#a6a8ad" stroke-width="2"><rect x="1.2" y="10.5" width="15.6" height="14"/><path d="M4.5 10.5V6.5a4.5 4.5 0 0 1 9 0v4"/><rect x="8" y="15.5" width="2" height="4" fill="#a6a8ad" stroke="none"/></svg>
<span class="t" style="left:4.1px;top:361.8px;font:11.5px 'Liberation Sans',sans-serif;line-height:17px;color:#4f545b;transform:translateY(-50%) scaleX(0.784);">Sagicor Life</span>
<span class="t" style="left:706.8px;top:361.8px;font:11.5px 'Liberation Sans',sans-serif;line-height:17px;color:#4f545b;transform:translateY(-50%) scaleX(0.832);">Agent, Admin</span>
<span class="t" style="left:882.0px;top:361.8px;font:11.5px 'Liberation Sans',sans-serif;line-height:17px;color:#4f545b;transform:translateY(-50%) scaleX(0.820);">03-15-2023</span>
<svg style="left:959.8px;top:355.4px" width="11.2" height="12" viewBox="0 0 22 24" fill="none" stroke="#a6a8ad" stroke-width="2"><path d="M14 4H1.5v18.5H18V11"/><path d="M9 14l1-3.5L19 1.5l2.5 2.5L12.5 13z"/></svg>
<svg style="left:976.6px;top:354.8px" width="8.8" height="12.6" viewBox="0 0 18 26" fill="none" stroke="#a6a8ad" stroke-width="2"><rect x="1.2" y="10.5" width="15.6" height="14"/><path d="M4.5 10.5V6.5a4.5 4.5 0 0 1 9 0v4"/><rect x="8" y="15.5" width="2" height="4" fill="#a6a8ad" stroke="none"/></svg>
<div class="a" style="left:0;top:374.1px;width:999.3px;height:25.4px;background:#f6f8fc"></div>
<div class="cell" style="left:0.0px;top:374.1px;width:154.5px;height:25.4px;background:#eff2fa"></div>
<div class="cell" style="left:157.1px;top:374.1px;width:154.4px;height:25.4px;background:#eff2fa"></div>
<div class="cell" style="left:313.9px;top:374.1px;width:154.0px;height:25.4px;background:#eff2fa"></div>
<div class="cell" style="left:470.2px;top:374.1px;width:152.9px;height:25.4px;background:#eff2fa"></div>
<div class="cell" style="left:625.9px;top:374.1px;width:75.0px;height:25.4px;background:#eff2fa"></div>
<div class="cell" style="left:703.3px;top:374.1px;width:154.5px;height:25.4px;background:#eff2fa"></div>
<div class="cell" style="left:859.8px;top:374.1px;width:91.7px;height:25.4px;background:#eff2fa"></div>
<div class="cell" style="left:953.7px;top:374.1px;width:45.6px;height:25.4px;background:#eff2fa"></div>
<span class="t" style="left:4.1px;top:387.2px;font:11.5px 'Liberation Sans',sans-serif;line-height:17px;color:#4f545b;transform:translateY(-50%) scaleX(0.788);">SBLI-Afficiency</span>
<span class="t" style="left:706.8px;top:387.2px;font:11.5px 'Liberation Sans',sans-serif;line-height:17px;color:#4f545b;transform:translateY(-50%) scaleX(0.832);">Agent, Admin</span>
<span class="t" style="left:882.0px;top:387.2px;font:11.5px 'Liberation Sans',sans-serif;line-height:17px;color:#4f545b;transform:translateY(-50%) scaleX(0.820);">03-15-2023</span>
<svg style="left:959.8px;top:380.8px" width="11.2" height="12" viewBox="0 0 22 24" fill="none" stroke="#a6a8ad" stroke-width="2"><path d="M14 4H1.5v18.5H18V11"/><path d="M9 14l1-3.5L19 1.5l2.5 2.5L12.5 13z"/></svg>
<svg style="left:976.6px;top:380.2px" width="8.8" height="12.6" viewBox="0 0 18 26" fill="none" stroke="#a6a8ad" stroke-width="2"><rect x="1.2" y="10.5" width="15.6" height="14"/><path d="M4.5 10.5V6.5a4.5 4.5 0 0 1 9 0v4"/><rect x="8" y="15.5" width="2" height="4" fill="#a6a8ad" stroke="none"/></svg>
<span class="t" style="left:4.1px;top:412.7px;font:11.5px 'Liberation Sans',sans-serif;line-height:17px;color:#4f545b;transform:translateY(-50%) scaleX(0.809);">Savings Bank Mutual Life Ins Co of</span>
<span class="t" style="left:4.1px;top:429.7px;font:11.5px 'Liberation Sans',sans-serif;line-height:17px;color:#4f545b;transform:translateY(-50%) scaleX(0.777);">MA</span>
<span class="t" style="left:706.8px;top:421.2px;font:11.5px 'Liberation Sans',sans-serif;line-height:17px;color:#4f545b;transform:translateY(-50%) scaleX(0.832);">Agent, Admin</span>
<span class="t" style="left:882.0px;top:421.2px;font:11.5px 'Liberation Sans',sans-serif;line-height:17px;color:#4f545b;transform:translateY(-50%) scaleX(0.820);">03-15-2023</span>
<svg style="left:959.8px;top:414.8px" width="11.2" height="12" viewBox="0 0 22 24" fill="none" stroke="#a6a8ad" stroke-width="2"><path d="M14 4H1.5v18.5H18V11"/><path d="M9 14l1-3.5L19 1.5l2.5 2.5L12.5 13z"/></svg>
<svg style="left:976.6px;top:414.2px" width="8.8" height="12.6" viewBox="0 0 18 26" fill="none" stroke="#a6a8ad" stroke-width="2"><rect x="1.2" y="10.5" width="15.6" height="14"/><path d="M4.5 10.5V6.5a4.5 4.5 0 0 1 9 0v4"/><rect x="8" y="15.5" width="2" height="4" fill="#a6a8ad" stroke="none"/></svg>
<div class="a" style="left:1000.7px;top:0;width:12px;height:439.6px;background:#f6f6f7"></div>
<div class="a" style="left:1001.4px;top:16.7px;width:9.8px;height:85.4px;background:#b9b9b9"></div>
<svg style="left:1003.2px;top:7.0px" width="6" height="4" viewBox="0 0 6 4"><path d="M0 4L3 0.5L6 4z" fill="#a8a8a8"/></svg>
<svg style="left:1003.2px;top:429.5px" width="6" height="4" viewBox="0 0 6 4"><path d="M0 0L3 3.5L6 0z" fill="#444"/></svg>
</div>
<div class="a" style="left:955.3px;top:129.2px;width:100.5px;height:50.3px;box-sizing:border-box;border:2px solid #cf0a1c;border-radius:3.5px"></div>
<div class="a" style="left:964.5px;top:147.5px;width:48.7px;height:23.4px;background:#050505;border-radius:3.5px"></div>
<span class="t" style="left:975.1px;top:159.4px;font:bold 12px 'Liberation Sans',sans-serif;line-height:17px;color:#f4f4f4;transform:translateY(-50%) scaleX(0.763);">Delete</span>
<div class="a" style="left:467.3px;top:568.4px;width:34.1px;height:27.8px;background:#fafafa"></div>
<div class="a" style="left:467.3px;top:595.7px;width:34.1px;height:1px;background:#cfcfcf"></div>
<span class="t" style="left:430.3px;top:584.3px;font:13px 'Liberation Sans',sans-serif;line-height:17px;color:#5c6670;transform:translateY(-50%) scaleX(0.781);">Display</span>
<span class="t" style="left:471.5px;top:584.3px;font:13px 'Liberation Sans',sans-serif;line-height:17px;color:#3a3f45;transform:translateY(-50%) scaleX(0.737);">100</span>
<svg style="left:488.4px;top:581px" width="7.2" height="4.4" viewBox="0 0 7.2 4.4"><path d="M0 0h7.2L3.6 4.4z" fill="#3d4854"/></svg>
<span class="t" style="left:506.0px;top:584.3px;font:13px 'Liberation Sans',sans-serif;line-height:17px;color:#5c6670;transform:translateY(-50%) scaleX(0.768);">Entries</span>
<div class="a" style="left:962.8px;top:573px;width:64.2px;height:24px;background:#f4f4f4;border-radius:3px"></div>
<span class="t" style="left:970.3px;top:584.6px;font:13px 'Liberation Sans',sans-serif;line-height:17px;color:#7a7a7a;transform:translateY(-50%) scaleX(0.747);">Page 1 of 1</span>
<div class="a" style="left:1034px;top:573.2px;width:20.9px;height:25.2px;border-radius:50%;background:#1172d0"></div>
<span class="t" style="left:1042.0px;top:585.0px;font:13px 'Liberation Sans',sans-serif;line-height:17px;color:#fff;transform:translateY(-50%) scaleX(0.800);">1</span>
<div class="a" style="left:0;top:616.2px;width:1070px;height:3.8px;background:#3e464d"></div>
<div class="a" style="left:0;top:616.2px;width:88.5px;height:3.8px;background:#e8906f"></div>
<div class="a" style="left:0;top:616.2px;width:21px;height:3.8px;background:#f58b62"></div>
</body></html>
